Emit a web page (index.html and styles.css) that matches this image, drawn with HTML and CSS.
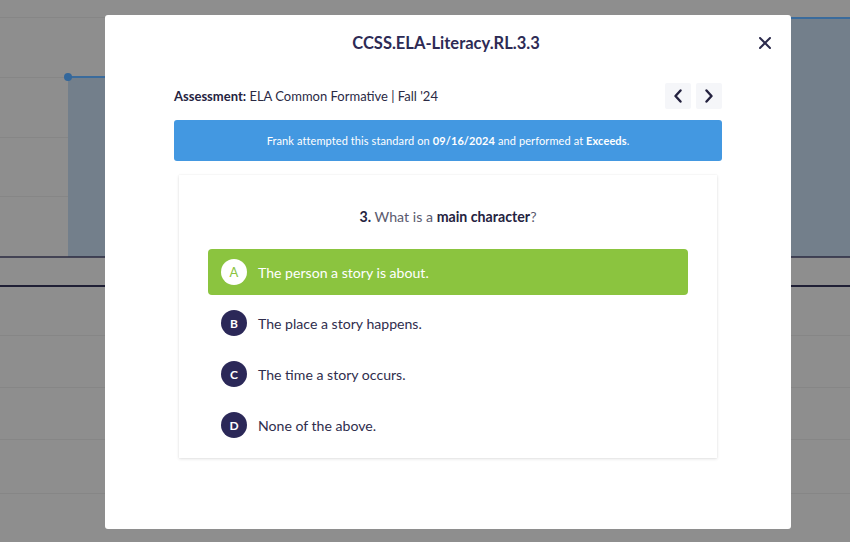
FILE: index.html
```html
<!DOCTYPE html>
<html>
<head>
<meta charset="utf-8">
<link rel="stylesheet" href="styles.css">
</head>
<body>
<div class="page">
  <svg class="chart" width="850" height="542" viewBox="0 0 850 542">
    <rect x="0" y="0" width="850" height="542" fill="#8e8e8e"/>
    <g stroke="#868686" stroke-width="1">
      <line x1="0" y1="17.5" x2="850" y2="17.5"/>
      <line x1="0" y1="77.5" x2="850" y2="77.5"/>
      <line x1="0" y1="137.5" x2="850" y2="137.5"/>
      <line x1="0" y1="196.5" x2="850" y2="196.5"/>
      <line x1="0" y1="335.5" x2="850" y2="335.5"/>
      <line x1="0" y1="387.5" x2="850" y2="387.5"/>
      <line x1="0" y1="439.5" x2="850" y2="439.5"/>
      <line x1="0" y1="493.5" x2="850" y2="493.5"/>
    </g>
    <rect x="68" y="77" width="380" height="180" fill="#737f8b"/>
    <rect x="448" y="18" width="402" height="239" fill="#737f8b"/>
    <polyline points="68,77 448,77 448,18 850,18" fill="none" stroke="#3a6b9c" stroke-width="2"/>
    <circle cx="68" cy="77" r="4" fill="#33679b"/>
    <line x1="0" y1="257" x2="850" y2="257" stroke="#2a2a40" stroke-width="1.5"/>
    <line x1="0" y1="286" x2="850" y2="286" stroke="#1f1f35" stroke-width="2"/>
  </svg>

  <div class="overlay">
    <div class="modal">
      <div class="modal-header">
        <h1 class="title">CCSS.ELA-Literacy.RL.3.3</h1>
        <button class="close" aria-label="Close">
          <svg width="12" height="12" viewBox="0 0 12 12"><path d="M1 1 L11 11 M11 1 L1 11" stroke="#2b2a4c" stroke-width="2" stroke-linecap="round"/></svg>
        </button>
      </div>

      <div class="assess-row">
        <div class="assess"><b>Assessment:</b> ELA Common Formative | Fall '24</div>
        <div class="navs">
          <button class="nav"><svg width="10" height="14" viewBox="0 0 10 14"><path d="M7.5 1.5 L2.5 7 L7.5 12.5" fill="none" stroke="#24223f" stroke-width="2.4" stroke-linecap="round" stroke-linejoin="round"/></svg></button>
          <button class="nav"><svg width="10" height="14" viewBox="0 0 10 14"><path d="M2.5 1.5 L7.5 7 L2.5 12.5" fill="none" stroke="#24223f" stroke-width="2.4" stroke-linecap="round" stroke-linejoin="round"/></svg></button>
        </div>
      </div>

      <div class="banner">Frank attempted this standard on <b>09/16/2024</b> and performed at <b>Exceeds</b>.</div>

      <div class="card">
        <p class="question"><b>3.</b> What is a <b>main character</b>?</p>
        <div class="options">
          <div class="option correct"><span class="letter">A</span><span class="text">The person a story is about.</span></div>
          <div class="option"><span class="letter">B</span><span class="text">The place a story happens.</span></div>
          <div class="option"><span class="letter">C</span><span class="text">The time a story occurs.</span></div>
          <div class="option"><span class="letter">D</span><span class="text">None of the above.</span></div>
        </div>
      </div>
    </div>
  </div>
</div>
</body>
</html>
```

FILE: styles.css
```css
* { box-sizing: border-box; }
html, body { margin: 0; padding: 0; }
body {
  width: 850px;
  height: 542px;
  overflow: hidden;
  font-family: Lato, "Liberation Sans", sans-serif;
  color: #2b2a4c;
}
.page { position: relative; width: 850px; height: 542px; }
.chart { display: block; }

.overlay {
  position: absolute;
  inset: 0;
  display: flex;
  align-items: flex-start;
  padding: 15px 0 0 105px;
}
.modal {
  width: 686px;
  height: 514px;
  background: #fff;
  border-radius: 3px;
  padding: 16px 69px 0 69px;
  display: flex;
  flex-direction: column;
}
.modal-header {
  position: relative;
  height: 24px;
  display: flex;
  align-items: center;
  justify-content: center;
}
.title {
  margin: 0 0 0 -4px;
  font-size: 16.5px;
  font-weight: 700;
  line-height: 24px;
  color: #2d2b55;
}
.close {
  position: absolute;
  right: -49px;
  top: 6px;
  width: 12px;
  height: 12px;
  padding: 0;
  border: 0;
  background: none;
  display: flex;
}

.assess-row {
  margin-top: 28px;
  height: 26px;
  display: flex;
  align-items: center;
  justify-content: space-between;
}
.assess { font-size: 13px; color: #2b2a45; }
.assess b { font-weight: 700; color: #25233f; }
.navs { display: flex; gap: 5px; }
.nav {
  width: 26px;
  height: 26px;
  border: 0;
  padding: 0;
  background: #f5f6f9;
  border-radius: 2px;
  display: flex;
  align-items: center;
  justify-content: center;
}

.banner {
  margin-top: 11px;
  height: 41px;
  background: #4398e1;
  border-radius: 3px;
  color: #fff;
  font-size: 11px;
  letter-spacing: 0.1px;
  display: flex;
  align-items: center;
  justify-content: center;
  white-space: pre;
}
.banner b { font-weight: 700; }

.card {
  margin: 14px 5px 0 5px;
  height: 283px;
  background: #fff;
  box-shadow: 0 1px 3px rgba(0,0,0,0.12), 0 0 1px rgba(0,0,0,0.08);
  padding: 32px 29px 10px 29px;
}
.question {
  margin: 0;
  text-align: center;
  font-size: 14.2px;
  line-height: 20px;
  color: #5a5a6e;
}
.question b { color: #25233f; font-weight: 700; }
.options {
  margin-top: 22px;
  display: flex;
  flex-direction: column;
  gap: 5px;
}
.option {
  height: 46px;
  display: flex;
  align-items: center;
  padding-left: 13px;
  border-radius: 4px;
  gap: 11px;
  font-size: 14.1px;
  color: #2f2d4d;
}
.letter {
  width: 26px;
  height: 26px;
  border-radius: 50%;
  background: #2b2858;
  color: #fff;
  font-size: 12px;
  font-weight: 700;
  display: flex;
  align-items: center;
  justify-content: center;
  flex: none;
}
.option.correct { background: #8bc43f; color: #fff; }
.option.correct .letter { background: #fff; color: #8bc43f; font-weight: 400; font-size: 13px; }
```
